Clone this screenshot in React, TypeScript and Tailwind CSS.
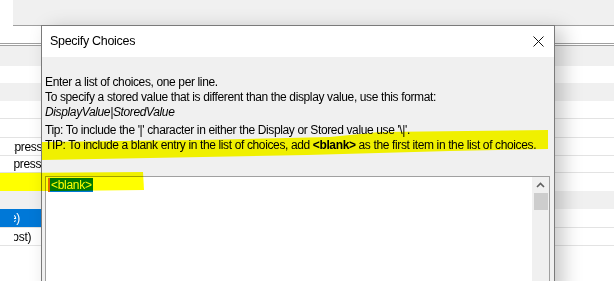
import React from 'react';

const rows = [
  { h: 17, left: '', bg: 'bg-white', border: false },
  { h: 3, left: '', bg: 'bg-white', border: false, dbl: true },
  { h: 20, left: '', bg: 'bg-[#f0f0f0]', border: false },
  { h: 17, left: '', bg: 'bg-white', border: false },
  { h: 18, left: '', bg: 'bg-[#f0f0f0]', border: false },
  { h: 18, left: '', bg: 'bg-white', border: true },
  { h: 19, left: '', bg: 'bg-white', border: true },
  { h: 18, left: 'Expression', bg: 'bg-white', border: true },
  { h: 17, left: 'Expressio', bg: 'bg-white', border: true },
  { h: 18, left: '', bg: 'bg-white', border: false },
  { h: 18, left: '', bg: 'bg-[#f0f0f0]', border: false },
  { h: 19, left: 'Value)', bg: 'bg-white', border: true, selected: true },
  { h: 18, left: 'Lost)', bg: 'bg-white', border: true },
  { h: 40, left: '', bg: 'bg-white', border: false },
];

function BackgroundList() {
  return (
    <div className="flex flex-col">
      {rows.map((r, i) => (
        <div
          key={i}
          style={{ height: r.h }}
          className={`flex ${r.dbl ? 'border-y border-[#a0a0a0]' : ''} ${r.border ? 'border-b border-[#e3e3e3]' : ''} ${r.bg}`}
        >
          <div className={`w-[41px] shrink-0 flex items-center overflow-hidden ${r.selected ? 'bg-[#0078d7] text-white' : ''}`}>
            <div className="w-[14px] shrink-0" />
            <div className="overflow-hidden flex-1">
              <span className={`block whitespace-nowrap text-[12px] tracking-[-0.3px] ${r.left === 'Expression' ? '-ml-[13px]' : r.left === 'Expressio' ? '-ml-[14px]' : r.left === 'Value)' ? '-ml-[26px]' : r.left === 'Lost)' ? '-ml-[8px]' : ''}`}>
                {r.left}
              </span>
            </div>
          </div>
          <div className="flex-1" />
        </div>
      ))}
    </div>
  );
}

export default function App() {
  return (
    <div className="relative w-[614px] h-[281px] overflow-hidden bg-white text-black font-['Liberation_Sans',Arial,sans-serif]">
      <div className="flex h-[25px]">
        <div className="w-[13px] bg-white" />
        <div className="flex-1 bg-[#f0f0f0] overflow-hidden">
          <div className="-mt-[16px] pl-[104px] text-[12px] text-[#222] whitespace-nowrap">
            Specify the type of input (Textbox, Drop-down, or Lookup) for this property
          </div>
        </div>
      </div>
      <div className="h-px ml-[13px] bg-[#a0a0a0]" />
      <BackgroundList />

      {/* dialog window */}
      <div className="absolute left-[41px] top-[25px] w-[514px] h-[270px] border border-[#7a7a7a] bg-[#f0f0f0] shadow-[8px_4px_18px_rgba(0,0,0,0.22)] flex flex-col">
        <div className="h-[31px] bg-white flex items-center justify-between pl-[8px] pr-[10px]">
          <span className="text-[12.5px] tracking-[-0.3px]">Specify Choices</span>
          <svg width="11" height="11" viewBox="0 0 11 11">
            <path d="M0.5 0.5 L10.5 10.5 M10.5 0.5 L0.5 10.5" stroke="#111" strokeWidth="1" />
          </svg>
        </div>
        <div className="pl-[3px] pt-[18px] text-[12px] leading-[15px] tracking-[-0.37px] whitespace-nowrap">
          <p>Enter a list of choices, one per line.</p>
          <p>To specify a stored value that is different than the display value, use this format:</p>
          <p className="italic">DisplayValue|StoredValue</p>
          <p className="mt-[3px]">Tip: To include the '|' character in either the Display or Stored value use '\|'.</p>
          <p>
            TIP: To include a blank entry in the list of choices, add <b>&lt;blank&gt;</b> as the first item in the list of choices.
          </p>
        </div>
        <div className="mt-[23px] ml-[3px] mr-[4px] flex-1 border border-[#a0a0a0] bg-white flex">
          <div className="flex-1 pt-px pl-[2px]">
            <div className="flex items-center h-[14px]">
              <div className="w-[2px] h-[14px] bg-[#e06a00]" />
              <span className="bg-[#0078d7] text-white text-[12px] leading-[14px] tracking-[-0.3px] px-px">&lt;blank&gt;</span>
            </div>
          </div>
          <div className="w-[17px] bg-[#f0f0f0] flex flex-col items-center">
            <svg width="9" height="6" viewBox="0 0 9 6" className="mt-[5px]">
              <path d="M1 5 L4.5 1.5 L8 5" stroke="#606060" strokeWidth="1.6" fill="none" />
            </svg>
            <div className="mt-[5px] w-[14px] h-[17px] bg-[#cdcdcd]" />
          </div>
        </div>
      </div>

      {/* highlighter marks */}
      <svg className="absolute inset-0 pointer-events-none mix-blend-multiply" width="614" height="281">
        <polygon
          points="42,142 200,140 330,137 380,132 548,130 548,149 450,151 307,155 150,158 42,160"
          fill="#ffff00"
        />
        <polygon points="0,173 143,172 144,190 60,191 0,191" fill="#ffff00" />
      </svg>
    </div>
  );
}
